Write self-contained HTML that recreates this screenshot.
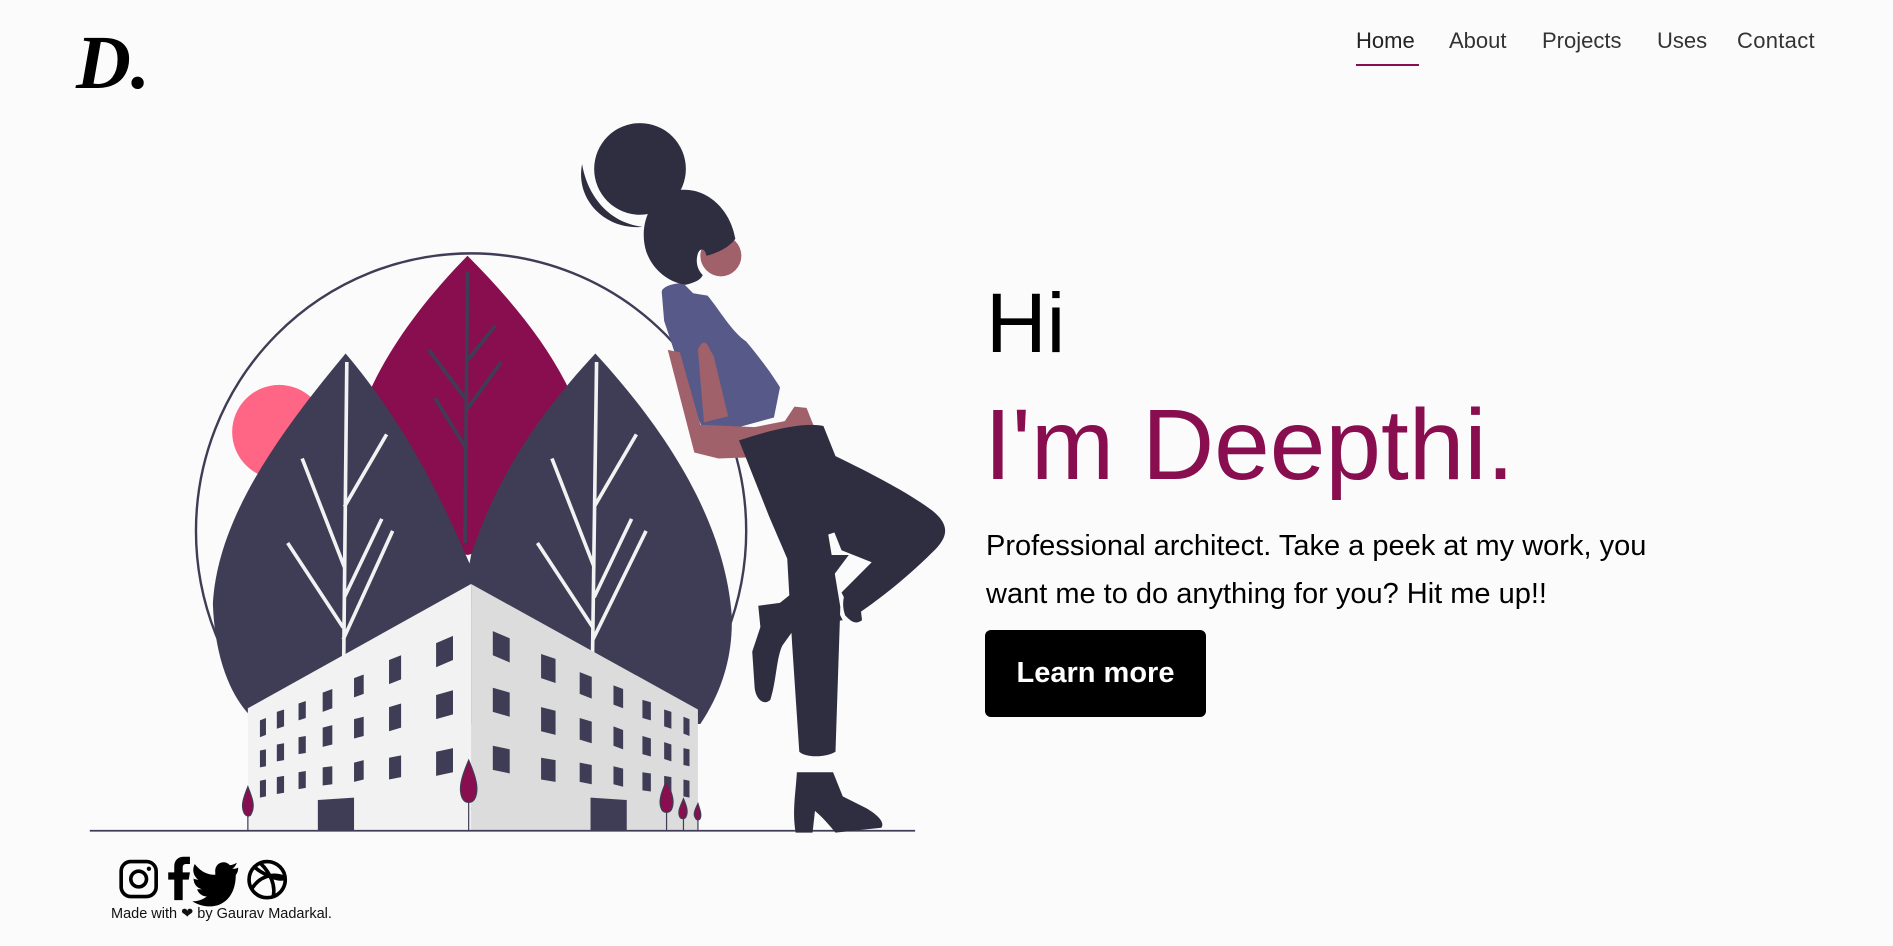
<!DOCTYPE html>
<html><head><meta charset="utf-8"><style>
html,body{margin:0;padding:0;background:#fbfbfc;width:1893px;height:946px;overflow:hidden;font-family:"Liberation Sans",sans-serif}
.a{position:absolute;white-space:nowrap}
nav a{position:absolute;top:26px;font-size:22px;color:#333;text-decoration:none;line-height:30px}
</style></head><body>
<svg class="a" style="left:0;top:0" width="1893" height="946" viewBox="0 0 1568 784">
<ellipse cx="390" cy="440" rx="228" ry="230" fill="none" stroke="#3f3d56" stroke-width="2"/>
<circle cx="231" cy="358" r="39" fill="#ff6584"/>
<path d="M387 212 C330 270 295 330 290 380 C300 420 350 450 387 460 C430 450 480 420 490 380 C480 320 440 265 387 212Z" fill="#880e4f"/>
<path d="M387 225 L385 450 M385 330 L355 290 M386 300 L410 270 M385 370 L360 330 M386 340 L415 300" stroke="#3f3d56" stroke-width="3" fill="none"/>
<path d="M286 293 C230 360 180 430 176 500 C178 560 200 590 215 600 L395 600 C405 560 400 500 390 470 C360 400 330 345 286 293Z" fill="#3f3d56"/>
<path d="M493 293 C440 350 410 400 390 460 C380 510 382 560 390 600 L580 600 C600 570 607 540 606 510 C600 430 550 355 493 293Z" fill="#3f3d56"/>
<g stroke="#f2f2f2" stroke-width="3" fill="none">
<path d="M287 300 L284 590 M285 420 L320 360 M285 470 L250 380 M284 530 L325 440 M284 520 L238 450 M285 495 L316 430"/>
<path d="M494 300 L490 590 M492 420 L527 360 M492 470 L457 380 M491 530 L535 440 M491 520 L445 450 M492 495 L523 430"/>
</g>
<path d="M205 587 L390 484 L390 688 L205 688Z" fill="#f2f2f2"/>
<path d="M390 484 L578 588 L578 688 L390 688Z" fill="#dcdcdc"/>
<g fill="#3f3d56">
<path d="M361 533l14-6v20l-14 6z M361 576l14-4v20l-14 4z M361 623l14-3v20l-14 3z"/>
<path d="M322 547l10-4v20l-10 4z M322 586l10-3v20l-10 3z M322 628l10-2v18l-10 2z"/>
<path d="M293 562l8-3v16l-8 3z M293 596l8-2v16l-8 2z M293 632l8-2v16l-8 2z"/>
<path d="M267 574l8-3v16l-8 3z M267 603l8-2v16l-8 2z M267 636l8-1v15l-8 1z"/>
<path d="M247 583l6-2v14l-6 2z M247 611l6-1v14l-6 1z M247 640l6-1v14l-6 1z"/>
<path d="M229 590l6-2v14l-6 2z M229 617l6-1v14l-6 1z M229 644l6-1v14l-6 1z"/>
<path d="M215 597l5-2v14l-5 2z M215 622l5-1v14l-5 1z M215 647l5-1v14l-5 1z"/>
<path d="M408 523l14 6v20l-14-6z M408 570l14 4v20l-14-4z M408 618l14 3v20l-14-3z"/>
<path d="M448 542l12 4v20l-12-4z M448 586l12 3v20l-12-3z M448 628l12 2v18l-12-2z"/>
<path d="M480 557l10 4v18l-10-4z M480 595l10 3v18l-10-3z M480 632l10 2v16l-10-2z"/>
<path d="M508 568l8 3v16l-8-3z M508 602l8 3v16l-8-3z M508 635l8 2v15l-8-2z"/>
<path d="M532 580l7 2v15l-7-2z M532 610l7 2v15l-7-2z M532 640l7 1v15l-7-1z"/>
<path d="M550 588l6 2v14l-6-2z M550 615l6 2v14l-6-2z M550 643l6 1v14l-6-1z"/>
<path d="M566 594l5 2v14l-5-2z M566 620l5 1v14l-5-1z M566 646l5 1v14l-5-1z"/>
<path d="M263 663l30-2v27h-30z M489 661l30 2v25h-30z"/>
</g>
<g fill="#880e4f" stroke="#3f3d56" stroke-width="1">
<path d="M205 652c-4 10-6 16-3 22 2 3 5 3 6 0 3-6 1-12-3-22z"/><line x1="205" y1="676" x2="205" y2="688"/>
<path d="M388 630c-6 14-9 24-5 32 2 4 8 4 10 0 4-8 1-18-5-32z"/><line x1="388" y1="664" x2="388" y2="688"/>
<path d="M552 647c-5 11-7 18-4 24 2 3 6 3 8 0 3-6 1-13-4-24z"/><line x1="552" y1="673" x2="552" y2="688"/>
<path d="M566 662c-3 7-5 11-3 15 1 2 4 2 5 0 2-4 1-8-2-15z"/><line x1="566" y1="678" x2="566" y2="688"/>
<path d="M578 666c-3 6-4 9-2 12 1 2 3 2 4 0 1-3 0-6-2-12z"/><line x1="578" y1="679" x2="578" y2="688"/>
</g>
<line x1="74" y1="688.5" x2="758" y2="688.5" stroke="#3f3d56" stroke-width="1.5"/>
<!-- woman -->
<circle cx="530" cy="140" r="38" fill="#2f2e41"/>
<path d="M482 136c-6 30 20 55 50 52c-30-4-46-28-50-52z" fill="#2f2e41"/>
<path d="M548 242c0-5 12-8 18-7l8 8 12 2c10 12 20 30 32 38c10 12 20 25 28 38l-5 25l-55 15c-10-12-24-60-36-95z" fill="#575a89"/>
<path d="M553 290l10 2 17 60 45 2 25-5 8-12 10 1 12 30-30 10-55 2-20-5z" fill="#a0616a"/>
<path d="M578 290c4-10 8-6 10 0l3 5 12 50-20 5z" fill="#a0616a"/>
<circle cx="597" cy="212" r="17" fill="#a0616a"/>
<path d="M609 198c-4-25-25-45-50-40c-22 5-30 30-24 50c5 15 18 26 33 28c8-2 12-4 14-8c-5-5-6-12-4-18c2-5 6-4 7 2c8-2 18-6 24-14z" fill="#2f2e41"/>
<path d="M612 365c30-10 55-15 70-12l10 25c25 12 60 30 80 45c15 12 14 22 0 35c-20 20-45 40-65 53l-10-20 25-25-25-10-8-20 12 2-15 5 10 60-4 120c-8 5-25 5-30 0l-6-90-4-70-15-35z" fill="#2f2e41"/>
<path d="M628 502l60-8 10 20-68 8z" fill="#2f2e41"/>
<path d="M668 460 l35 0 -30 40 -25 35c-5 10-5 30-10 45c-5 5-12 0-13-10l-2-30 10-30 25-20z" fill="#2f2e41"/>
<path d="M710 480c-8 4-15 16-10 30c5 5 8 8 14 4z" fill="#2f2e41"/>
<path d="M660 640l30 0 8 20 20 10c10 6 15 12 12 16l-38 4c-5-6-10-12-17-18l-2 18h-14c-3-18 0-32 1-50z" fill="#2f2e41"/>
<!-- footer icons -->
<g fill="none" stroke="#000" stroke-width="3">
<rect x="100" y="714" width="29" height="29" rx="8"/>
<circle cx="114.5" cy="728.5" r="6.5"/>
<circle cx="221" cy="729" r="15" />
<path d="M210 718c6 6 20 12 25 10M208 737c6-10 16-14 27-10M216 716c8 8 12 18 10 27"/>
</g>
<circle cx="123" cy="720" r="1.8" fill="#000"/>
<path d="M144 746v-17h-5v-6h5v-5c0-5 3-8 8-8h5v6h-3c-2 0-3 1-3 3v4h6l-1 6h-5v17z" fill="#000"/>
<path d="M197 719c-2 1-3 1-5 1c2-1 3-3 4-5c-2 1-4 2-6 2c-4-5-13-2-12 6v2c-8 0-13-4-17-9c-3 6 0 11 3 13c-1 0-3 0-4-1c0 5 3 8 7 9h-4c1 4 5 6 8 6c-4 3-8 4-12 4c17 10 36 2 36-22c1-1 2-3 2-6z" fill="#000"/>
</svg>
<div class="a" style="left:76px;top:18px;font-family:'Liberation Serif',serif;font-style:italic;font-weight:bold;font-size:76px;line-height:90px;color:#000">D.</div>
<nav>
<a style="left:1356px;color:#222">Home</a>
<a style="left:1449px">About</a>
<a style="left:1542px">Projects</a>
<a style="left:1657px">Uses</a>
<a style="left:1737px;letter-spacing:0.3px">Contact</a>
</nav>
<div class="a" style="left:1356px;top:64px;width:63px;height:2px;background:#880e4f"></div>
<div class="a" style="left:986px;top:281px;font-size:84px;line-height:84px;color:#000">Hi</div>
<div class="a" style="left:984px;top:395px;font-size:100px;line-height:100px;color:#880e4f">I'm Deepthi.</div>
<div class="a" style="left:986px;top:522px;font-size:29px;line-height:48px;color:#000">Professional architect. Take a peek at my work, you<br>want me to do anything for you? Hit me up!!</div>
<div class="a" style="left:985px;top:630px;width:221px;height:87px;background:#000;border-radius:6px;color:#fff;font-weight:bold;font-size:29px;line-height:87px;text-align:center">Learn more</div>
<div class="a" style="left:111px;top:906px;font-size:14.5px;color:#111">Made with ❤ by Gaurav Madarkal.</div>
</body></html>
